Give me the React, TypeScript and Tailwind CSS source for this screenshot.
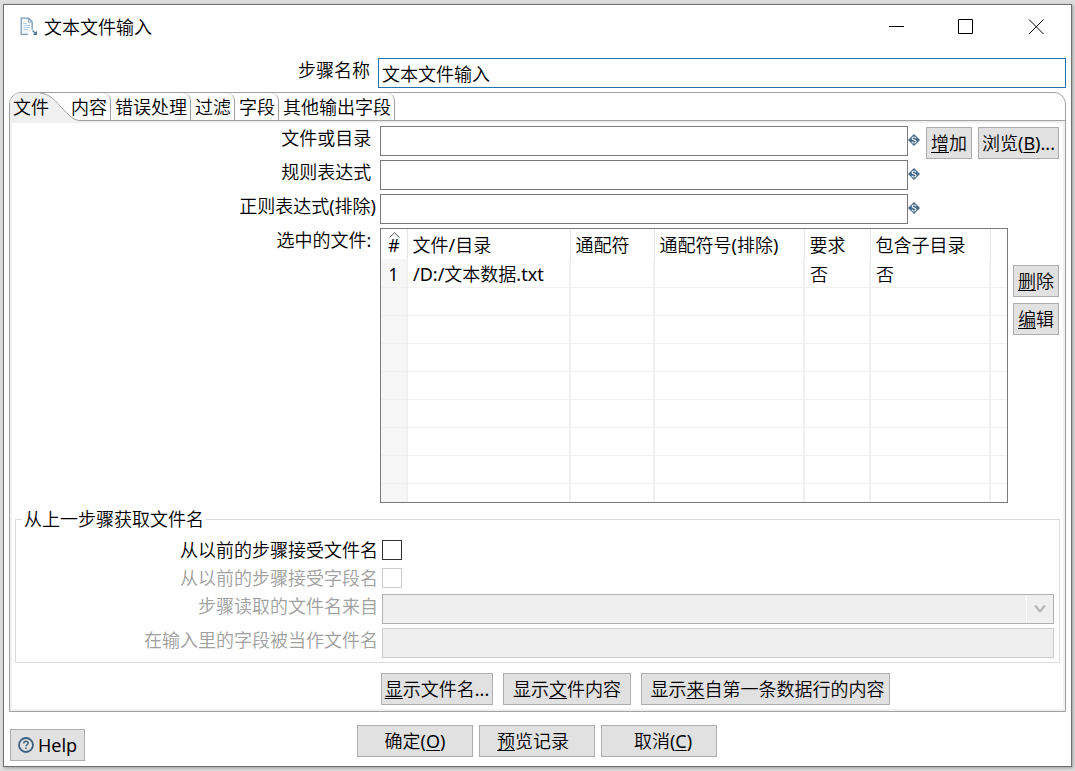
import { useState } from "react";
import type { ReactNode } from "react";

const TABS = ["内容", "错误处理", "过滤", "字段", "其他输出字段"];

const COLUMNS = ["文件/目录", "通配符", "通配符号(排除)", "要求", "包含子目录"];

const FILES = [["/D:/文本数据.txt", "", "", "否", "否"]];

const EMPTY_ROWS = [0, 1, 2, 3, 4, 5, 6];

function Button({ children, className = "" }: { children: ReactNode; className?: string }) {
  return (
    <button
      type="button"
      className={`h-8 shrink-0 whitespace-nowrap border border-[#adadad] bg-[#e1e1e1] leading-6 ${className}`}
    >
      {children}
    </button>
  );
}

function Key({ children }: { children: ReactNode }) {
  return <span className="underline decoration-1 underline-offset-2">{children}</span>;
}

function VariableIcon() {
  return (
    <svg width="12" height="12" viewBox="0 0 12 12" className="mt-2 shrink-0" aria-hidden="true">
      <path d="M6 0 12 6 6 12 0 6Z" fill="#466a8a" />
      <path
        d="M8 4.3C7.7 3.4 6.9 3 6 3 4.9 3 4.1 3.6 4.1 4.4 4.1 6.3 8 5.4 8 7.5 8 8.4 7.1 9 6 9 5 9 4.2 8.5 3.9 7.7"
        fill="none"
        stroke="#eef4f8"
        strokeWidth="1.2"
      />
    </svg>
  );
}

function PathField({ id, label }: { id: string; label: string }) {
  return (
    <div className="flex items-start">
      <label htmlFor={id} className="w-[364px] shrink-0 whitespace-pre text-right leading-6">
        {label}
      </label>
      <input
        id={id}
        type="text"
        className="ml-1 h-[30px] min-w-0 flex-1 border border-[#7a7a7a] bg-white px-1 outline-none"
      />
      <VariableIcon />
    </div>
  );
}

function TitleBar() {
  return (
    <header className="flex h-[43px] items-center pl-4 pr-[27px]">
      <svg width="18" height="20" viewBox="0 0 18 20" fill="none" aria-hidden="true">
        <path d="M8 17.3H1.2V1.2H8.6L12.2 4.8V12.5" fill="#f2f8fc" stroke="#7d9db8" strokeWidth="1.3" />
        <path d="M8.4 1.4V5H12" stroke="#7d9db8" />
        <path d="M3.5 6.5H7M3.5 8.5H10M3.5 10.5H10M3.5 12.5H8" stroke="#b4d0e4" />
        <path d="M12.5 13.5 16 17" stroke="#4d7898" strokeWidth="1.3" />
        <path d="M17 13.8V18H12.8Z" fill="#4d7898" />
      </svg>
      <h1 className="ml-[6px] flex-1">文本文件输入</h1>
      <div className="flex items-center gap-[54px]">
        <button type="button" aria-label="最小化">
          <svg width="16" height="16" viewBox="0 0 16 16" stroke="#000" fill="none">
            <path d="M1 7.5H16" />
          </svg>
        </button>
        <button type="button" aria-label="最大化">
          <svg width="16" height="16" viewBox="0 0 16 16" stroke="#000" fill="none">
            <path d="M.5 .5H14.5V14.5H.5Z" />
          </svg>
        </button>
        <button type="button" aria-label="关闭">
          <svg width="16" height="16" viewBox="0 0 16 16" stroke="#000" fill="none">
            <path d="M1 .5 15.5 15M15.5 .5 1 15" />
          </svg>
        </button>
      </div>
    </header>
  );
}

function TabBar() {
  return (
    <div role="tablist" className="relative flex h-7 border-b border-[#a0a0a0]">
      <svg width="74" height="28" viewBox="0 0 74 28" className="absolute left-0 top-0" aria-hidden="true">
        <path d="M0 28V0H30C41 1 46 9 52 15 58 21 62 27 70 27.5V28Z" fill="#f0f0f0" />
        <path d="M30 0C41 1 46 9 52 15 58 21 62 27 70 27.5" fill="none" stroke="#a0a0a0" />
      </svg>
      <button type="button" role="tab" aria-selected="true" className="relative w-[57px] pl-[3px] text-left leading-7">
        文件
      </button>
      {TABS.map((tab) => (
        <button
          key={tab}
          type="button"
          role="tab"
          aria-selected="false"
          className="relative rounded-tr-lg border-r border-[#a0a0a0] pl-1 pr-[3px] leading-7"
        >
          {tab}
        </button>
      ))}
    </div>
  );
}

function FileTable() {
  return (
    <div className="ml-1 h-[275px] min-w-0 flex-1 overflow-hidden border border-[#7a7a7a] bg-white">
      <table className="w-full table-fixed border-collapse text-left leading-6">
        <colgroup>
          <col className="w-[26px]" />
          <col className="w-[163px]" />
          <col className="w-[84px]" />
          <col className="w-[150px]" />
          <col className="w-[66px]" />
          <col className="w-[120px]" />
          <col />
        </colgroup>
        <thead>
          <tr className="h-[30px]">
            <th className="relative border-r border-[#e5e5e5] p-0 pt-[2px] text-center font-normal">
              <svg
                width="11"
                height="6"
                viewBox="0 0 11 6"
                className="absolute left-2 top-[3px]"
                fill="none"
                stroke="#555"
                aria-hidden="true"
              >
                <path d="M.5 5.5 5.5 .7 10.5 5.5" />
              </svg>
              #
            </th>
            {COLUMNS.map((column) => (
              <th key={column} className="whitespace-nowrap border-r border-[#e5e5e5] p-0 pl-[5px] pt-[2px] font-normal">
                {column}
              </th>
            ))}
            <th className="p-0" />
          </tr>
        </thead>
        <tbody>
          {FILES.map((file, row) => (
            <tr key={file[0]} className="h-7 border-b border-[#f0f0f0]">
              <td className="border-r-2 border-[#f0f0f0] bg-[#f6f6f6] p-0 pt-[2px] text-center">{row + 1}</td>
              {file.map((value, i) => (
                <td key={COLUMNS[i]} className="whitespace-nowrap border-r-2 border-[#f0f0f0] p-0 pl-[5px] pt-[2px]">
                  {value}
                </td>
              ))}
              <td className="p-0" />
            </tr>
          ))}
          {EMPTY_ROWS.map((row) => (
            <tr key={row} className="h-7 border-b border-[#f0f0f0]">
              <td className="border-r-2 border-[#f0f0f0] bg-[#f6f6f6] p-0" />
              {COLUMNS.map((column) => (
                <td key={column} className="border-r-2 border-[#f0f0f0] p-0" />
              ))}
              <td className="p-0" />
            </tr>
          ))}
          <tr className="h-5">
            <td className="border-r-2 border-[#f0f0f0] bg-[#f6f6f6] p-0" />
            {COLUMNS.map((column) => (
              <td key={column} className="border-r-2 border-[#f0f0f0] p-0" />
            ))}
            <td className="p-0" />
          </tr>
        </tbody>
      </table>
    </div>
  );
}

function PreviousStep() {
  return (
    <fieldset className="mx-[3px] mt-1 border border-[#dcdcdc] pb-1 pr-[5px]">
      <legend className="ml-[6px] px-[2px] leading-6">从上一步骤获取文件名</legend>
      <div className="flex flex-col pt-[5px]">
        <div className="flex h-7 items-center">
          <label htmlFor="accept-files" className="w-[362px] shrink-0 text-right">
            从以前的步骤接受文件名
          </label>
          <input
            id="accept-files"
            type="checkbox"
            className="ml-1 size-5 appearance-none border border-[#333] bg-white checked:bg-[#0078d7]"
          />
        </div>
        <div className="flex h-7 items-center">
          <label htmlFor="accept-fields" className="w-[362px] shrink-0 text-right text-[#a0a0a0]">
            从以前的步骤接受字段名
          </label>
          <input
            id="accept-fields"
            type="checkbox"
            disabled
            className="ml-1 size-5 appearance-none border border-[#ccc] bg-white"
          />
        </div>
        <div className="mt-[2px] flex items-start">
          <label htmlFor="source-step" className="w-[362px] shrink-0 text-right leading-6 text-[#a0a0a0]">
            步骤读取的文件名来自
          </label>
          <div className="relative ml-1 min-w-0 flex-1">
            <select
              id="source-step"
              disabled
              className="block h-[30px] w-full appearance-none border border-[#b0b0b0] bg-[#efefef] opacity-100"
            />
            <span className="pointer-events-none absolute inset-y-[2px] right-px flex w-[27px] items-center justify-center border-l border-white">
              <svg width="12" height="10" viewBox="0 0 12 10" fill="none" stroke="#b4b4b4" strokeWidth="2" aria-hidden="true">
                <path d="M1 1.5 6 7.5 11 1.5" />
              </svg>
            </span>
          </div>
        </div>
        <div className="mt-1 flex items-start">
          <label htmlFor="source-field" className="w-[362px] shrink-0 text-right leading-6 text-[#a0a0a0]">
            在输入里的字段被当作文件名
          </label>
          <input
            id="source-field"
            type="text"
            disabled
            className="ml-1 h-[30px] min-w-0 flex-1 border border-[#ccc] bg-[#efefef] px-1"
          />
        </div>
      </div>
    </fieldset>
  );
}

export default function App() {
  const [name, setName] = useState("文本文件输入");

  return (
    <div className="min-h-screen bg-[#dedede] px-[3px] py-1 font-['Noto_Sans','Noto_Sans_CJK_SC_DemiLight','Noto_Sans_CJK_SC',sans-serif] text-lg font-normal leading-6 text-black">
      <main className="border border-[#707070] bg-white shadow-[1px_1px_3px_#999]">
        <TitleBar />

        <div className="flex items-start px-[5px] pt-[10px]">
          <label htmlFor="step-name" className="w-[361px] shrink-0 text-right leading-6">
            步骤名称
          </label>
          <input
            id="step-name"
            type="text"
            value={name}
            onChange={(event) => setName(event.target.value)}
            className="ml-2 h-[30px] min-w-0 flex-1 border border-[#2472b0] bg-white px-[3px] outline-none"
          />
        </div>

        <section className="mx-[5px] mt-1 overflow-hidden rounded-t-xl border border-[#a0a0a0]">
          <TabBar />
          <div role="tabpanel" className="border-2 border-[#f0f0f0] pb-1 pt-[3px]">
            <div className="flex items-start">
              <div className="flex min-w-0 flex-1 flex-col gap-1">
                <PathField id="file" label={"文件或目录 "} />
                <PathField id="wildcard" label={"规则表达式 "} />
                <PathField id="exclude" label="正则表达式(排除)" />
              </div>
              <div className="ml-[6px] mr-1 mt-px flex gap-[6px]">
                <Button className="w-[46px]">
                  <Key>增</Key>加
                </Button>
                <Button className="w-[81px]">
                  浏览(<Key>B</Key>)...
                </Button>
              </div>
            </div>

            <div className="mt-1 flex items-start">
              <span className="w-[364px] shrink-0 whitespace-pre text-right leading-6">{"选中的文件: "}</span>
              <FileTable />
              <div className="ml-[5px] mr-1 mt-[37px] flex flex-col gap-[6px]">
                <Button className="w-[46px]">
                  <Key>删</Key>除
                </Button>
                <Button className="w-[46px]">
                  <Key>编</Key>辑
                </Button>
              </div>
            </div>

            <PreviousStep />

            <div className="mt-[10px] flex gap-[10px] pl-[369px]">
              <Button className="w-28">
                <Key>显</Key>示文件名...
              </Button>
              <Button className="w-32">
                显示<Key>文</Key>件内容
              </Button>
              <Button className="w-[249px] pl-1">
                显示<Key>来</Key>自第一条数据行的内容
              </Button>
            </div>
          </div>
        </section>

        <footer className="mb-[5px] mt-[13px] grid grid-cols-[1fr_auto_1fr] pl-[6px] pr-[7px]">
          <div className="pt-1">
            <Button className="flex w-[75px] items-center justify-center gap-1">
              <svg width="16" height="16" viewBox="0 0 16 16" fill="none" stroke="#3f6080" aria-hidden="true">
                <circle cx="8" cy="8" r="7" strokeWidth="1.8" />
                <path d="M5.8 6.4C5.8 5 6.8 4.3 8 4.3 9.3 4.3 10.2 5 10.2 6.1 10.2 7.5 8 7.6 8 9.3" strokeWidth="1.5" />
                <path d="M8 10.4V12" strokeWidth="1.6" />
              </svg>
              Help
            </Button>
          </div>
          <div className="flex gap-[6px]">
            <Button className="w-[116px]">
              确定(<Key>O</Key>)
            </Button>
            <Button className="w-[116px] pr-2">
              <Key>预</Key>览记录
            </Button>
            <Button className="w-[116px] pl-2">
              取消(<Key>C</Key>)
            </Button>
          </div>
          <div />
        </footer>
      </main>
    </div>
  );
}
